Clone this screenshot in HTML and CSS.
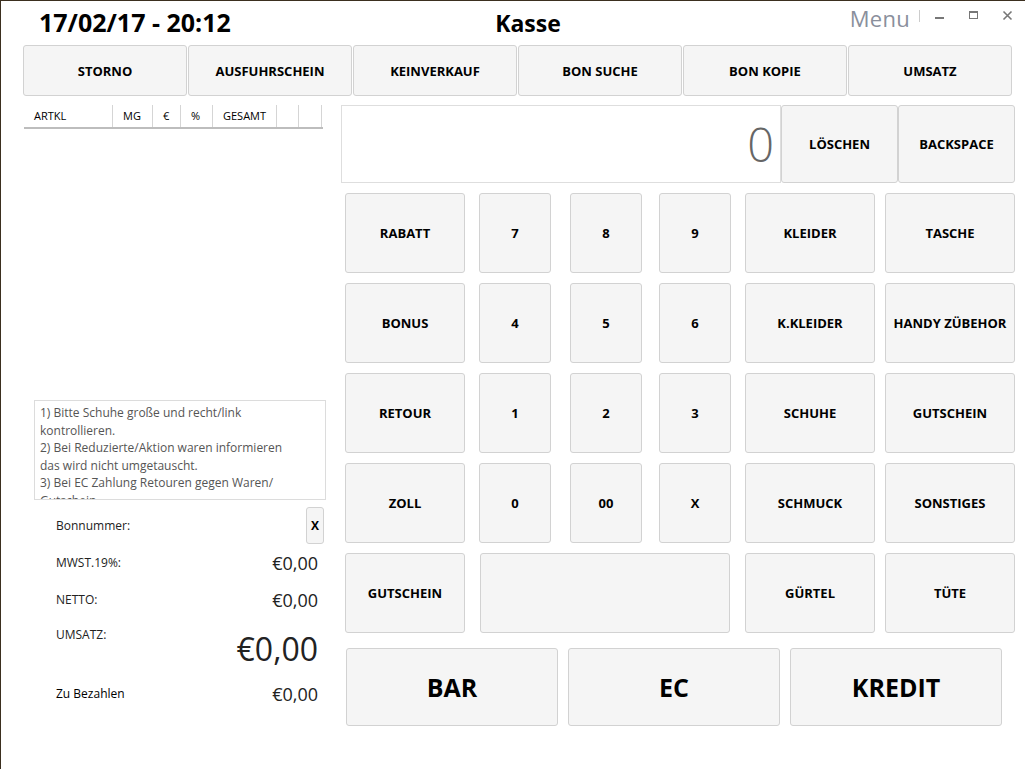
FILE: index.html
```html
<!DOCTYPE html>
<html lang="de">
<head>
    <meta charset="UTF-8">
    <title>Kasse</title>
    <link rel="stylesheet" href="styles.css">
</head>
<body>
    <div class="window">
        <header class="titlebar">
            <div class="clock">17/02/17 - 20:12</div>
            <div class="title">Kasse</div>
            <div class="controls">
                <span class="menu">Menu</span>
                <span class="sep"></span>
                <svg class="ctl" width="12" height="12" viewBox="0 0 12 12"><rect x="1" y="7" width="9" height="2" fill="#777"/></svg>
                <svg class="ctl" width="12" height="12" viewBox="0 0 12 12"><rect x="1.5" y="1.5" width="8" height="7" fill="none" stroke="#777"/><rect x="1" y="1" width="9" height="2" fill="#777"/></svg>
                <svg class="ctl" width="12" height="12" viewBox="0 0 12 12"><path d="M1.5 1.5 L9.5 9.5 M9.5 1.5 L1.5 9.5" stroke="#777" stroke-width="1.6"/></svg>
            </div>
        </header>

        <nav class="toolbar">
            <button class="btn">STORNO</button>
            <button class="btn">AUSFUHRSCHEIN</button>
            <button class="btn">KEINVERKAUF</button>
            <button class="btn">BON SUCHE</button>
            <button class="btn">BON KOPIE</button>
            <button class="btn">UMSATZ</button>
        </nav>

        <main class="content">
            <section class="left">
                <div class="items-head">
                    <span class="c-art">ARTKL</span>
                    <span class="c-mg">MG</span>
                    <span class="c-eur">€</span>
                    <span class="c-pct">%</span>
                    <span class="c-sum">GESAMT</span>
                    <span class="c-x1"></span>
                    <span class="c-x2"></span>
                </div>
                <div class="items-body"></div>

                <div class="notes">
                    1) Bitte Schuhe große und recht/link kontrollieren.<br>
                    2) Bei Reduzierte/Aktion waren informieren das wird nicht umgetauscht.<br>
                    3) Bei EC Zahlung Retouren gegen Waren/ Gutschein
                </div>

                <div class="bon-row">
                    <span>Bonnummer:</span>
                    <button class="btn btn-x">X</button>
                </div>
                <div class="total-row">
                    <span>MWST.19%:</span>
                    <span class="val">€0,00</span>
                </div>
                <div class="total-row">
                    <span>NETTO:</span>
                    <span class="val">€0,00</span>
                </div>
                <div class="total-row big">
                    <span>UMSATZ:</span>
                    <span class="val">€0,00</span>
                </div>
                <div class="total-row">
                    <span class="dark">Zu Bezahlen</span>
                    <span class="val">€0,00</span>
                </div>
            </section>

            <section class="right">
                <div class="display-row">
                    <div class="display">0</div>
                    <button class="btn">LÖSCHEN</button>
                    <button class="btn">BACKSPACE</button>
                </div>

                <div class="keypad">
                    <button class="btn w-side">RABATT</button>
                    <button class="btn w-num">7</button>
                    <button class="btn w-num">8</button>
                    <button class="btn w-num">9</button>
                    <button class="btn w-cat">KLEIDER</button>
                    <button class="btn w-cat">TASCHE</button>

                    <button class="btn w-side">BONUS</button>
                    <button class="btn w-num">4</button>
                    <button class="btn w-num">5</button>
                    <button class="btn w-num">6</button>
                    <button class="btn w-cat">K.KLEIDER</button>
                    <button class="btn w-cat">HANDY ZÜBEHOR</button>

                    <button class="btn w-side">RETOUR</button>
                    <button class="btn w-num">1</button>
                    <button class="btn w-num">2</button>
                    <button class="btn w-num">3</button>
                    <button class="btn w-cat">SCHUHE</button>
                    <button class="btn w-cat">GUTSCHEIN</button>

                    <button class="btn w-side">ZOLL</button>
                    <button class="btn w-num">0</button>
                    <button class="btn w-num">00</button>
                    <button class="btn w-num">X</button>
                    <button class="btn w-cat">SCHMUCK</button>
                    <button class="btn w-cat">SONSTIGES</button>

                    <button class="btn w-side">GUTSCHEIN</button>
                    <button class="btn w-wide"></button>
                    <button class="btn w-cat">GÜRTEL</button>
                    <button class="btn w-cat">TÜTE</button>
                </div>

                <div class="pay-row">
                    <button class="btn pay">BAR</button>
                    <button class="btn pay">EC</button>
                    <button class="btn pay">KREDIT</button>
                </div>
            </section>
        </main>
    </div>
</body>
</html>
```

FILE: styles.css
```css
* {
    margin: 0;
    padding: 0;
    box-sizing: border-box;
    font-family: "Open Sans", "Noto Sans", sans-serif;
}

body {
    background-color: #fff;
    color: #000;
}

.window {
    width: 1025px;
    height: 769px;
    border-top: 1px solid #3b2f1f;
    border-left: 1px solid #3b2f1f;
    overflow: hidden;
}

/* title bar */
.titlebar {
    display: grid;
    grid-template-columns: 1fr auto 1fr;
    align-items: start;
    height: 44px;
}

.clock {
    font-size: 25px;
    font-weight: 700;
    padding: 4px 0 0 38px;
}

.title {
    font-size: 23px;
    font-weight: 700;
    padding-top: 6px;
    margin-left: 30px;
}

.controls {
    display: flex;
    justify-content: flex-end;
    align-items: flex-start;
    padding-right: 11px;
}

.menu {
    font-size: 22px;
    color: #8a8f9c;
    margin-top: 2px;
    letter-spacing: 0.3px;
}

.sep {
    width: 1px;
    height: 12px;
    background-color: #ccc;
    margin: 9px 10px 0 9px;
}

.ctl {
    margin: 9px 0 0 22px;
}

.ctl:first-of-type {
    margin-left: 4px;
}

/* buttons */
.btn {
    background-color: #f5f5f5;
    border: 1px solid #d2d2d2;
    border-radius: 3px;
    font-size: 13px;
    font-weight: 700;
    color: #000;
}

.toolbar {
    display: flex;
    gap: 1px;
    padding-left: 22px;
}

.toolbar .btn {
    width: 164px;
    height: 51px;
}

.content {
    display: grid;
    grid-template-columns: 340px 676px;
    margin-top: 9px;
}

/* left column */
.left {
    padding-left: 23px;
}

.items-head {
    display: flex;
    width: 299px;
    height: 24px;
    border-bottom: 2px solid #bdbdbd;
    font-size: 11px;
    color: #000;
}

.items-head span {
    padding: 3px 0 0 10px;
    border-right: 1px solid #d5d5d5;
}

.c-art { width: 89px; }
.c-mg { width: 40px; }
.c-eur { width: 28px; }
.c-pct { width: 32px; }
.c-sum { width: 64px; }
.c-x1 { width: 22px; }
.c-x2 { width: 23px; }

.items-body {
    height: 271px;
}

.notes {
    margin-left: 10px;
    width: 292px;
    height: 100px;
    border: 1px solid #dcdcdc;
    padding: 3px 28px 3px 5px;
    font-size: 12px;
    line-height: 17.5px;
    color: #555;
    overflow: hidden;
}

.bon-row,
.total-row {
    display: flex;
    justify-content: space-between;
    align-items: center;
    padding-left: 32px;
    width: 300px;
    font-size: 12px;
    color: #222;
}

.bon-row {
    height: 37px;
    margin-top: 7px;
}

.btn-x {
    width: 18px;
    height: 37px;
    font-size: 12px;
}

.total-row {
    height: 37px;
}

.total-row .val {
    font-size: 18px;
    padding-right: 6px;
}

.total-row.big {
    height: 57px;
    align-items: flex-start;
    padding-top: 8px;
}

.total-row.big .val {
    font-size: 32px;
    line-height: 40px;
    margin-top: 3px;
}

.dark {
    color: #000;
}

/* right column */
.right {
    display: flex;
    flex-direction: column;
}

.display-row {
    display: flex;
    height: 78px;
}

.display {
    width: 440px;
    border: 1px solid #dedede;
    text-align: right;
    font-size: 47px;
    line-height: 76px;
    color: #666;
    padding-right: 6px;
    font-weight: 300;
}

.display-row .btn {
    width: 117px;
}

.keypad {
    display: grid;
    grid-template-columns: 134px 91px 89px 86px 140px 130px;
    grid-auto-rows: 80px;
    row-gap: 10px;
    margin: 10px 0 0 4px;
}

.w-side { width: 120px; }
.w-num { width: 72px; }
.w-cat { width: 130px; }

.w-wide {
    grid-column: span 3;
    width: 250px;
    margin-left: 1px;
}

.pay-row {
    display: flex;
    gap: 10px;
    margin: 15px 0 0 5px;
}

.pay {
    width: 212px;
    height: 78px;
    font-size: 25px;
}
```
